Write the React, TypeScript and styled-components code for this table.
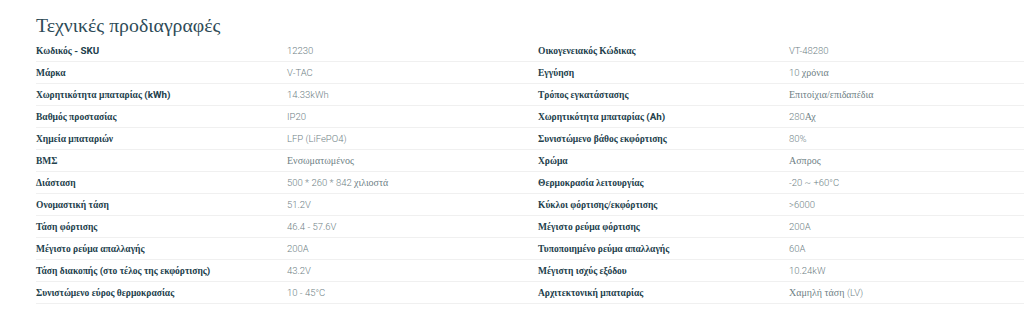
import React from "react";
import styled, { createGlobalStyle } from "styled-components";

const Global = createGlobalStyle`
  html, body { margin: 0; padding: 0; background: #fff; overflow: hidden; }
  body { font-family: Roboto, "Liberation Sans", sans-serif; }
`;

const Page = styled.div`
  width: 1024px;
  height: 317px;
  overflow: hidden;
  padding: 13px 0 0 36px;
  box-sizing: border-box;
`;

const Title = styled.h2`
  margin: 0 0 3px 0;
  font-family: "Liberation Serif", "DejaVu Serif", serif;
  font-weight: 400;
  font-size: 19.8px;
  line-height: 24px;
  color: #2e4b57;
`;

const Grid = styled.div`
  display: grid;
  grid-template-columns: repeat(2, 502px);
  width: 1004px;
`;

const Table = styled.div`
  display: grid;
  grid-template-columns: 251px 251px;
`;

const Cell = styled.div<{ $label?: boolean }>`
  border-bottom: 1px solid #f0f0f0;
  display: flex;
  align-items: flex-start;
  padding-top: 5px;
  height: 16px;
  white-space: nowrap;
  font-size: ${(p) => (p.$label ? "9.8px" : "9.5px")};
  line-height: 12px;
  font-weight: ${(p) => (p.$label ? 700 : 300)};
  color: ${(p) => (p.$label ? "#22404b" : "#6f7f86")};
  font-family: Roboto, "Liberation Sans", sans-serif;
`;

const Greek = styled.span<{ $label?: boolean }>`
  font-family: "Liberation Serif", "DejaVu Serif", serif;
  font-size: ${(p) => (p.$label ? "9.5px" : "10px")};
  font-weight: ${(p) => (p.$label ? 700 : 400)};
  white-space: pre;
`;

const Latin = styled.span`
  white-space: pre;
`;

const greekRe = /([\u0370-\u03FF\u1F00-\u1FFF][\u0370-\u03FF\u1F00-\u1FFF\s\/]*)/;

function Mixed({ text, label }: { text: string; label?: boolean }) {
  const parts = text.split(greekRe).filter((s) => s.length > 0);
  return (
    <>
      {parts.map((p, i) =>
        /[\u0370-\u03FF\u1F00-\u1FFF]/.test(p) ? (
          <Greek key={i} $label={label}>
            {p}
          </Greek>
        ) : (
          <Latin key={i}>{p}</Latin>
        )
      )}
    </>
  );
}

const left: [string, string][] = [
  ["Κωδικός - SKU", "12230"],
  ["Μάρκα", "V-TAC"],
  ["Χωρητικότητα μπαταρίας (kWh)", "14.33kWh"],
  ["Βαθμός προστασίας", "IP20"],
  ["Χημεία μπαταριών", "LFP (LiFePO4)"],
  ["ΒΜΣ", "Ενσωματωμένος"],
  ["Διάσταση", "500 * 260 * 842 χιλιοστά"],
  ["Ονομαστική τάση", "51.2V"],
  ["Τάση φόρτισης", "46.4 - 57.6V"],
  ["Μέγιστο ρεύμα απαλλαγής", "200A"],
  ["Τάση διακοπής (στο τέλος της εκφόρτισης)", "43.2V"],
  ["Συνιστώμενο εύρος θερμοκρασίας", "10 - 45°C"],
];

const right: [string, string][] = [
  ["Οικογενειακός Κώδικας", "VT-48280"],
  ["Εγγύηση", "10 χρόνια"],
  ["Τρόπος εγκατάστασης", "Επιτοίχια/επιδαπέδια"],
  ["Χωρητικότητα μπαταρίας (Ah)", "280Αχ"],
  ["Συνιστώμενο βάθος εκφόρτισης", "80%"],
  ["Χρώμα", "Ασπρος"],
  ["Θερμοκρασία λειτουργίας", "-20 ~ +60°C"],
  ["Κύκλοι φόρτισης/εκφόρτισης", ">6000"],
  ["Μέγιστο ρεύμα φόρτισης", "200A"],
  ["Τυποποιημένο ρεύμα απαλλαγής", "60A"],
  ["Μέγιστη ισχύς εξόδου", "10.24kW"],
  ["Αρχιτεκτονική μπαταρίας", "Χαμηλή τάση (LV)"],
];

function SpecTable({ rows }: { rows: [string, string][] }) {
  return (
    <Table>
      {rows.map(([k, v]) => (
        <React.Fragment key={k}>
          <Cell $label>
            <Mixed text={k} label />
          </Cell>
          <Cell>
            <Mixed text={v} />
          </Cell>
        </React.Fragment>
      ))}
    </Table>
  );
}

export default function App() {
  return (
    <>
      <Global />
      <Page>
        <Title>Τεχνικές προδιαγραφές</Title>
        <Grid>
          <SpecTable rows={left} />
          <SpecTable rows={right} />
        </Grid>
      </Page>
    </>
  );
}
